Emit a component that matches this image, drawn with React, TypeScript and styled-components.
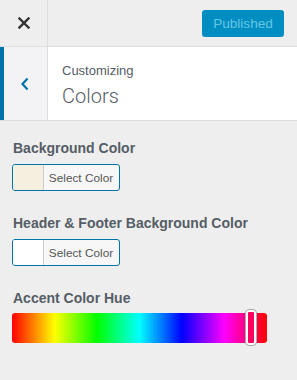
import React from "react";
import styled, { createGlobalStyle } from "styled-components";

const Global = createGlobalStyle`
  html, body { margin: 0; padding: 0; background: #eeeeee; }
  body { font-family: "Liberation Sans", Arial, sans-serif; }
  * { box-sizing: border-box; }
`;

const Panel = styled.div`
  width: 297px;
  height: 380px;
  background: #eeeeee;
  display: flex;
  flex-direction: column;
`;

const TopBar = styled.div`
  height: 47px;
  display: flex;
  align-items: center;
  border-bottom: 1px solid #dddddd;
  background: #eeeeee;
`;

const CloseButton = styled.div`
  width: 48px;
  height: 46px;
  border-right: 1px solid #dddddd;
  display: flex;
  align-items: center;
  justify-content: center;
  padding-left: 1px;
`;

const Spacer = styled.div`
  flex: 1;
`;

const PublishButton = styled.div`
  width: 82px;
  height: 27px;
  margin-right: 13px;
  border-radius: 3px;
  background: #008ec2;
  color: #66c6e4;
  font-size: 13.6px;
  display: flex;
  align-items: center;
  justify-content: center;
`;

const SectionHeader = styled.div`
  height: 74px;
  display: flex;
  border-bottom: 1px solid #dddddd;
  background: #ffffff;
`;

const BackButton = styled.div`
  width: 48px;
  border-left: 4px solid #0073aa;
  border-right: 1px solid #dddddd;
  background: #f3f3f5;
  display: flex;
  align-items: center;
  justify-content: center;
  padding-right: 1px;
`;

const Titles = styled.div`
  display: flex;
  flex-direction: column;
  padding: 16px 0 0 14px;
  color: #555d66;
`;

const Small = styled.div`
  font-size: 13px;
  line-height: 16px;
`;

const Big = styled.div`
  font-family: Roboto, "Liberation Sans", sans-serif;
  font-size: 20px;
  font-weight: 300;
  line-height: 24px;
  margin-top: 5px;
`;

const Content = styled.div`
  padding: 18px 12px 0 12px;
  display: flex;
  flex-direction: column;
`;

const Control = styled.div`
  display: flex;
  flex-direction: column;
  margin-bottom: 23px;
`;

const Label = styled.div`
  font-size: 14px;
  font-weight: 700;
  color: #555d66;
  line-height: 18px;
  margin-bottom: 7px;
  margin-left: 1px;
`;

const ColorButton = styled.div`
  width: 108px;
  height: 27px;
  border: 1px solid #0073aa;
  border-radius: 3px;
  display: flex;
  overflow: hidden;
  background: #f7f7f7;
`;

const Swatch = styled.div<{ $color: string }>`
  width: 31px;
  background: ${(p) => p.$color};
  border-right: 1px solid #cccccc;
`;

const SwatchText = styled.div`
  flex: 1;
  display: flex;
  align-items: center;
  justify-content: center;
  font-size: 11.8px;
  color: #555555;
  padding-right: 1px;
`;

const HueWrap = styled.div`
  position: relative;
  width: 255px;
  height: 30px;
  margin-top: -1px;
`;

const HueBar = styled.div`
  width: 255px;
  height: 30px;
  border-radius: 3px;
  background: linear-gradient(
    to right,
    #ff0000 0%,
    #ffff00 16.67%,
    #00ff00 33.33%,
    #00ffff 50%,
    #0000ff 66.67%,
    #ff00ff 83.33%,
    #ff0000 100%
  );
`;

const Thumb = styled.div`
  position: absolute;
  left: 234px;
  top: -3px;
  width: 10px;
  height: 35px;
  border: 2px solid #ffffff;
  outline: 1px solid #aaaaaa;
  border-radius: 3px;
  background: #ff0060;
`;

export default function App() {
  return (
    <>
      <Global />
      <Panel>
        <TopBar>
          <CloseButton>
            <svg width="12" height="12" viewBox="0 0 12 12">
              <path d="M1.5 1.5 L10.5 10.5 M10.5 1.5 L1.5 10.5" stroke="#333" strokeWidth="2.4" strokeLinecap="square" />
            </svg>
          </CloseButton>
          <Spacer />
          <PublishButton>Published</PublishButton>
        </TopBar>
        <SectionHeader>
          <BackButton>
            <svg width="10" height="14" viewBox="0 0 10 14">
              <path d="M7.5 1.5 L2.5 7 L7.5 12.5" fill="none" stroke="#0073aa" strokeWidth="2.2" />
            </svg>
          </BackButton>
          <Titles>
            <Small>Customizing</Small>
            <Big>Colors</Big>
          </Titles>
        </SectionHeader>
        <Content>
          <Control>
            <Label>Background Color</Label>
            <ColorButton>
              <Swatch $color="#f5efe0" />
              <SwatchText>Select Color</SwatchText>
            </ColorButton>
          </Control>
          <Control>
            <Label>Header &amp; Footer Background Color</Label>
            <ColorButton>
              <Swatch $color="#ffffff" />
              <SwatchText>Select Color</SwatchText>
            </ColorButton>
          </Control>
          <Control>
            <Label>Accent Color Hue</Label>
            <HueWrap>
              <HueBar />
              <Thumb />
            </HueWrap>
          </Control>
        </Content>
      </Panel>
    </>
  );
}
